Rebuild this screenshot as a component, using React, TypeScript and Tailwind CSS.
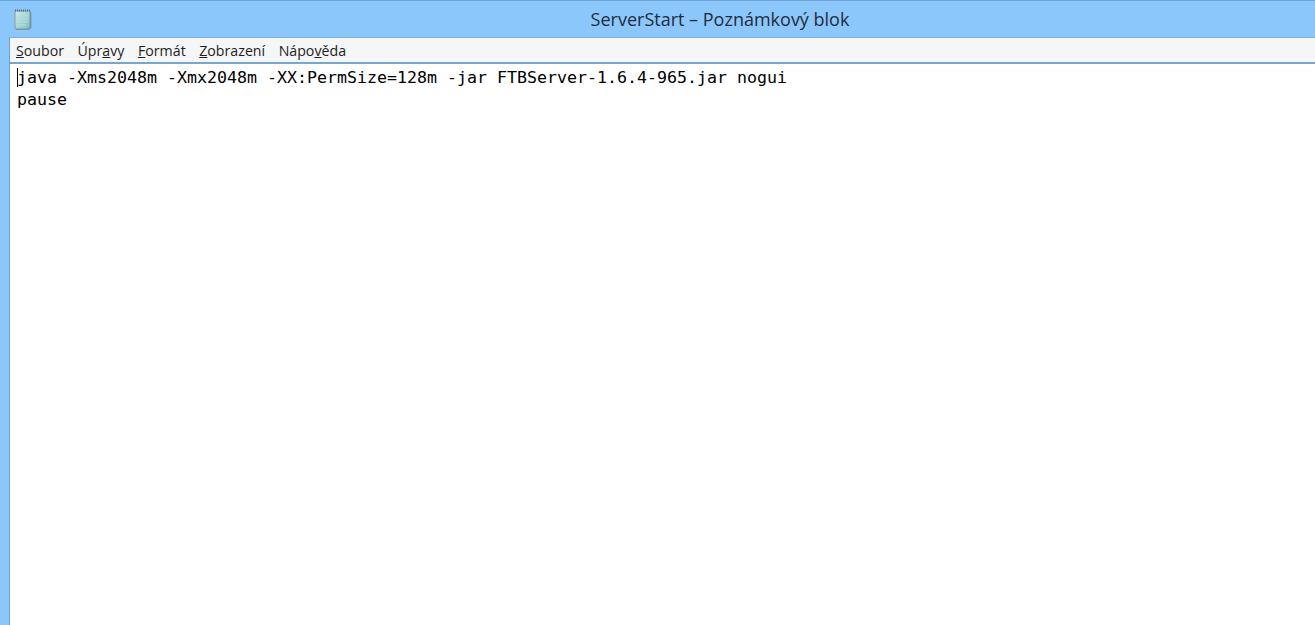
import React from 'react';

const menuItems: { before: string; key: string; after: string }[] = [
    { before: '', key: 'S', after: 'oubor' },
    { before: 'Úpr', key: 'a', after: 'vy' },
    { before: '', key: 'F', after: 'ormát' },
    { before: '', key: 'Z', after: 'obrazení' },
    { before: 'Nápo', key: 'v', after: 'ěda' },
];

const NotepadIcon: React.FC = () => (
    <svg width="20" height="22" viewBox="0 0 20 22">
        <defs>
            <linearGradient id="page" x1="0" y1="0" x2="1" y2="1">
                <stop offset="0" stopColor="#d4ecea" />
                <stop offset="0.6" stopColor="#9bd2d2" />
                <stop offset="1" stopColor="#7fbdc2" />
            </linearGradient>
        </defs>
        <path d="M2 2 H17 V18 L15 20 H2 Z" fill="url(#page)" stroke="#8a9aa0" strokeWidth="1" />
        <path d="M17 3 H18.5 V19 L16 21 H3 V20 H15 L17 18 Z" fill="#6f7f86" opacity="0.6" />
        <path d="M2 1.5 H17" stroke="#5f6f78" strokeWidth="2" strokeDasharray="1 1" />
        <path d="M4 7 H15 M4 10 H15 M4 13 H15 M4 16 H13" stroke="#bcdedd" strokeWidth="1" />
    </svg>
);

export default function App() {
    return (
        <div className="w-[1315px] h-[625px] overflow-hidden flex flex-col bg-[#8cc7fb] border-t border-[#6fa3d6]">
            {/* Title bar */}
            <header className="h-[36px] shrink-0 flex items-center relative">
                <div className="absolute left-[13px] top-[8px]">
                    <NotepadIcon />
                </div>
                <h1 className="w-full text-center text-[18px] pl-[125px] text-[#1f2d3d] font-['Open_Sans','Noto_Sans',sans-serif]">
                    ServerStart – Poznámkový blok
                </h1>
            </header>

            <div className="flex-1 min-h-0 flex pl-[9px]">
                <div className="flex-1 min-w-0 flex flex-col border-l border-[#6fa3d6]">
                    {/* Menu bar */}
                    <nav className="h-[27px] shrink-0 flex items-center gap-[13.5px] pl-[6px] pt-px bg-[#f5f6f7] border-t border-b-2 border-t-[#7ab0e0] border-b-[#7ba6cc] text-[14.2px] text-[#1e1e1e] font-['Open_Sans','Noto_Sans',sans-serif]">
                        {menuItems.map((item) => (
                            <span key={item.before + item.key}>
                                {item.before}
                                <u>{item.key}</u>
                                {item.after}
                            </span>
                        ))}
                    </nav>

                    {/* Editor */}
                    <main className="flex-1 bg-white pl-[7px] pt-[3px] relative text-black text-[16.62px] leading-[22px] whitespace-pre font-['DejaVu_Sans_Mono',monospace]">
                        <div className="absolute left-[7px] top-[4px] w-px h-[19px] bg-black" />
                        <div>java -Xms2048m -Xmx2048m -XX:PermSize=128m -jar FTBServer-1.6.4-965.jar nogui</div>
                        <div>pause</div>
                    </main>
                </div>
            </div>
        </div>
    );
}
